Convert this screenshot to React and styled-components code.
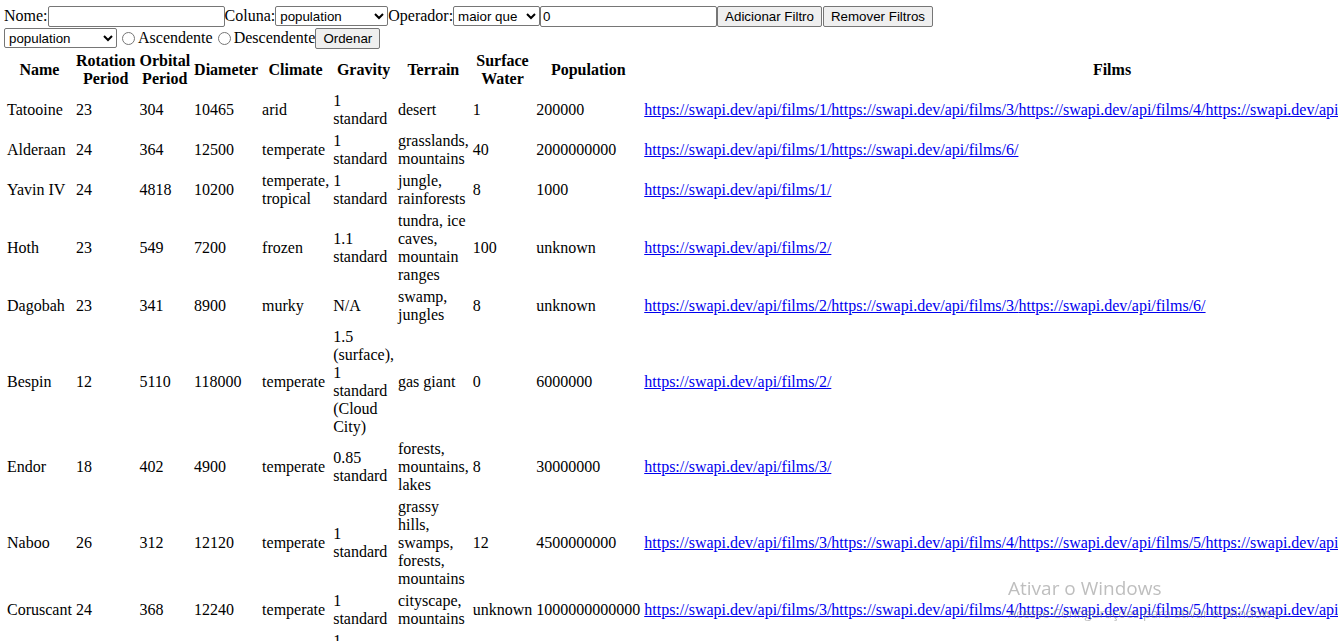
import React from "react"
import styled, { createGlobalStyle } from "styled-components"

const GlobalStyle = createGlobalStyle`
    body {
        margin: 4px;
        font-family: "Liberation Serif", "Times New Roman", serif;
        font-size: 16px;
        color: #000;
        background: #fff;
    }
`

const planets = [
    { name: "Tatooine", rotation: "23", orbital: "304", diameter: "10465", climate: "arid", gravity: "1 standard", terrain: "desert", water: "1", population: "200000", films: [1, 3, 4, 5, 6] },
    { name: "Alderaan", rotation: "24", orbital: "364", diameter: "12500", climate: "temperate", gravity: "1 standard", terrain: "grasslands, mountains", water: "40", population: "2000000000", films: [1, 6] },
    { name: "Yavin IV", rotation: "24", orbital: "4818", diameter: "10200", climate: "temperate, tropical", gravity: "1 standard", terrain: "jungle, rainforests", water: "8", population: "1000", films: [1] },
    { name: "Hoth", rotation: "23", orbital: "549", diameter: "7200", climate: "frozen", gravity: "1.1 standard", terrain: "tundra, ice caves, mountain ranges", water: "100", population: "unknown", films: [2] },
    { name: "Dagobah", rotation: "23", orbital: "341", diameter: "8900", climate: "murky", gravity: "N/A", terrain: "swamp, jungles", water: "8", population: "unknown", films: [2, 3, 6] },
    { name: "Bespin", rotation: "12", orbital: "5110", diameter: "118000", climate: "temperate", gravity: "1.5 (surface), 1 standard (Cloud City)", terrain: "gas giant", water: "0", population: "6000000", films: [2] },
    { name: "Endor", rotation: "18", orbital: "402", diameter: "4900", climate: "temperate", gravity: "0.85 standard", terrain: "forests, mountains, lakes", water: "8", population: "30000000", films: [3] },
    { name: "Naboo", rotation: "26", orbital: "312", diameter: "12120", climate: "temperate", gravity: "1 standard", terrain: "grassy hills, swamps, forests, mountains", water: "12", population: "4500000000", films: [3, 4, 5, 6] },
    { name: "Coruscant", rotation: "24", orbital: "368", diameter: "12240", climate: "temperate", gravity: "1 standard", terrain: "cityscape, mountains", water: "unknown", population: "1000000000000", films: [3, 4, 5, 6] },
    { name: "Kamino", rotation: "27", orbital: "463", diameter: "19720", climate: "temperate", gravity: "1 standard", terrain: "ocean", water: "100", population: "1000000000", films: [5] },
]

const headers = ["Name", "Rotation Period", "Orbital Period", "Diameter", "Climate", "Gravity", "Terrain", "Surface Water", "Population", "Films"]

const columns = ["population", "orbital_period", "diameter", "rotation_period", "surface_water"]

function App() {
    return (
        <>
            <GlobalStyle />
            <FilterBar>
                <Label>Nome:<TextInput type="text" /></Label>
                <Label>Coluna:
                    <Select width={113} defaultValue="population">
                        {columns.map(c => <option key={c} value={c}>{c}</option>)}
                    </Select>
                </Label>
                <Label>Operador:
                    <Select width={87} defaultValue="maior">
                        <option value="maior">maior que</option>
                        <option value="menor">menor que</option>
                        <option value="igual">igual a</option>
                    </Select>
                </Label>
                <TextInput type="number" defaultValue="0" />
                <Button>Adicionar Filtro</Button>
                <Button>Remover Filtros</Button>
            </FilterBar>
            <SortBar>
                <Select width={113} defaultValue="population">
                    {columns.map(c => <option key={c} value={c}>{c}</option>)}
                </Select>
                <RadioLabel><Radio type="radio" name="sort" />Ascendente</RadioLabel>
                <RadioLabel><Radio type="radio" name="sort" />Descendente</RadioLabel>
                <Button>Ordenar</Button>
            </SortBar>
            <Table>
                <thead>
                    <tr>
                        {headers.map(h => <Th key={h}>{h}</Th>)}
                    </tr>
                </thead>
                <tbody>
                    {planets.map(p => (
                        <tr key={p.name}>
                            <Td>{p.name}</Td>
                            <Td>{p.rotation}</Td>
                            <Td>{p.orbital}</Td>
                            <Td>{p.diameter}</Td>
                            <Td>{p.climate}</Td>
                            <Td>{p.gravity}</Td>
                            <Td>{p.terrain}</Td>
                            <Td>{p.water}</Td>
                            <Td>{p.population}</Td>
                            <Td nowrap>
                                {p.films.map(f => (
                                    <FilmLink key={f} href="#">{`https://swapi.dev/api/films/${f}/`}</FilmLink>
                                ))}
                            </Td>
                        </tr>
                    ))}
                </tbody>
            </Table>
            <Watermark>
                <h2>Ativar o Windows</h2>
                <p>Acesse Configurações para ativar o Windows.</p>
            </Watermark>
        </>
    )
}

export default App

const FilterBar = styled.div`
    display: flex;
    align-items: center;
    height: 24px;
`

const SortBar = styled.div`
    display: flex;
    align-items: center;
    height: 20px;
`

const Label = styled.label`
    display: flex;
    align-items: center;
    white-space: nowrap;
`

const TextInput = styled.input`
    box-sizing: border-box;
    width: 177px;
    height: 21px;
    margin: 0;
    padding: 1px 2px;
    font-family: "Liberation Sans", Arial, sans-serif;
    font-size: 13.33px;
    border: 1px solid #767676;
    border-radius: 2px;
`

const Select = styled.select`
    box-sizing: border-box;
    width: ${props => props.width}px;
    height: 20px;
    margin: 0;
    font-family: "Liberation Sans", Arial, sans-serif;
    font-size: 13.33px;
    border: 1px solid #767676;
    border-radius: 2px;
    background: #fff;
`

const Button = styled.button`
    box-sizing: border-box;
    height: 21px;
    margin: 0 1px 0 0;
    padding: 1px 7px;
    font-family: "Liberation Sans", Arial, sans-serif;
    font-size: 13.33px;
    color: #000;
    background: #efefef;
    border: 1px solid #767676;
    border-radius: 2px;
    white-space: nowrap;
`

const RadioLabel = styled.label`
    display: flex;
    align-items: center;
    white-space: nowrap;
`

const Radio = styled.input`
    width: 13px;
    height: 13px;
    margin: 0 3px 0 5px;
`

const Table = styled.table`
    border-collapse: separate;
    border-spacing: 2px;
    margin-top: 1px;
`

const Th = styled.th`
    padding: 1px;
    font-weight: bold;
    text-align: center;
    vertical-align: middle;
`

const Td = styled.td`
    padding: 1px;
    text-align: left;
    vertical-align: middle;
    white-space: ${props => (props.nowrap ? "nowrap" : "normal")};
`

const FilmLink = styled.a`
    color: #0000ee;
    text-decoration: underline;
`

const Watermark = styled.div`
    position: fixed;
    left: 1008px;
    top: 576px;
    pointer-events: none;
    font-family: "Open Sans", "Noto Sans", sans-serif;
    color: rgba(110, 110, 110, 0.45);
    h2 {
        margin: 0;
        font-size: 19px;
        font-weight: 400;
        line-height: 24px;
    }
    p {
        margin: 4px 0 0;
        font-size: 13px;
        line-height: 18px;
    }
`
